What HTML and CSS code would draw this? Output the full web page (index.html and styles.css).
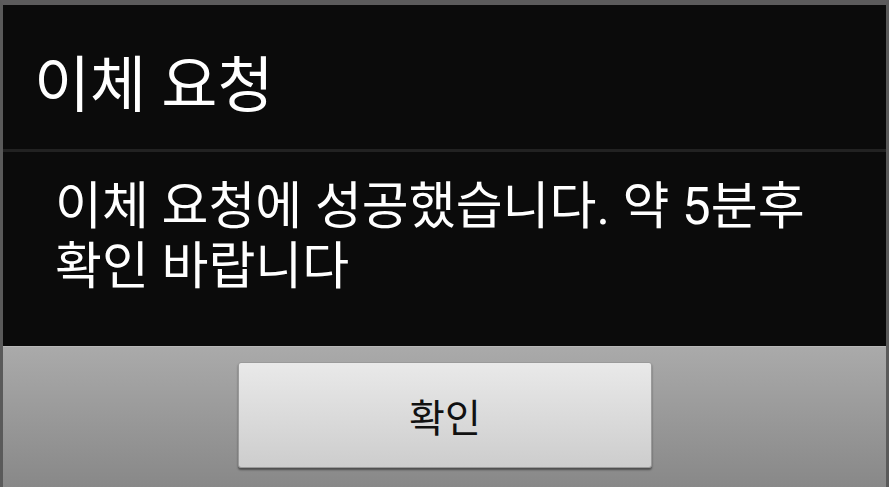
FILE: index.html
```html
<!DOCTYPE html>
<html lang="ko">
<head>
<meta charset="utf-8">
<link rel="stylesheet" href="styles.css">
</head>
<body>
<div class="frame">
  <div class="title">이체 요청</div>
  <div class="divider"></div>
  <div class="message">이체 요청에 성공했습니다. 약 5분후<br>확인 바랍니다</div>
  <div class="footer">
    <button class="ok">확인</button>
  </div>
</div>
</body>
</html>
```
FILE: styles.css
```css
html, body {
  margin: 0;
  padding: 0;
  background: #0b0b0b;
}
.frame {
  width: 889px;
  height: 487px;
  box-sizing: border-box;
  border-top: 5px solid #5c5b5c;
  border-left: 3px solid #5a5a5a;
  border-right: 3px solid #5a5a5a;
  display: flex;
  flex-direction: column;
  font-family: "Roboto", "Noto Sans CJK KR", sans-serif;
  background: #0b0b0b;
}
.title {
  height: 144px;
  box-sizing: border-box;
  padding: 18px 0 0 31px;
  display: flex;
  align-items: center;
  color: #ffffff;
  font-size: 61px;
  line-height: 1;
}
.divider {
  height: 3px;
  background: #222222;
}
.message {
  height: 194px;
  box-sizing: border-box;
  padding: 25px 0 0 52px;
  color: #ffffff;
  font-size: 51px;
  line-height: 60px;
}
.footer {
  flex: 1;
  background: linear-gradient(#aaaaaa, #888888);
  display: flex;
  justify-content: center;
  padding-top: 15px;
  box-sizing: border-box;
  border-top: 1px solid #b8b8b8;
}
.ok {
  width: 414px;
  height: 106px;
  border: 1px solid #9a9a9a;
  border-radius: 3px;
  background: linear-gradient(#e9e9e9, #cdcdcd);
  box-shadow: 0 2px 2px rgba(0,0,0,0.45);
  font-family: "Roboto", "Noto Sans CJK KR", sans-serif;
  font-size: 39px;
  color: #111111;
  padding: 0;
  margin-left: 1px;
}
```
